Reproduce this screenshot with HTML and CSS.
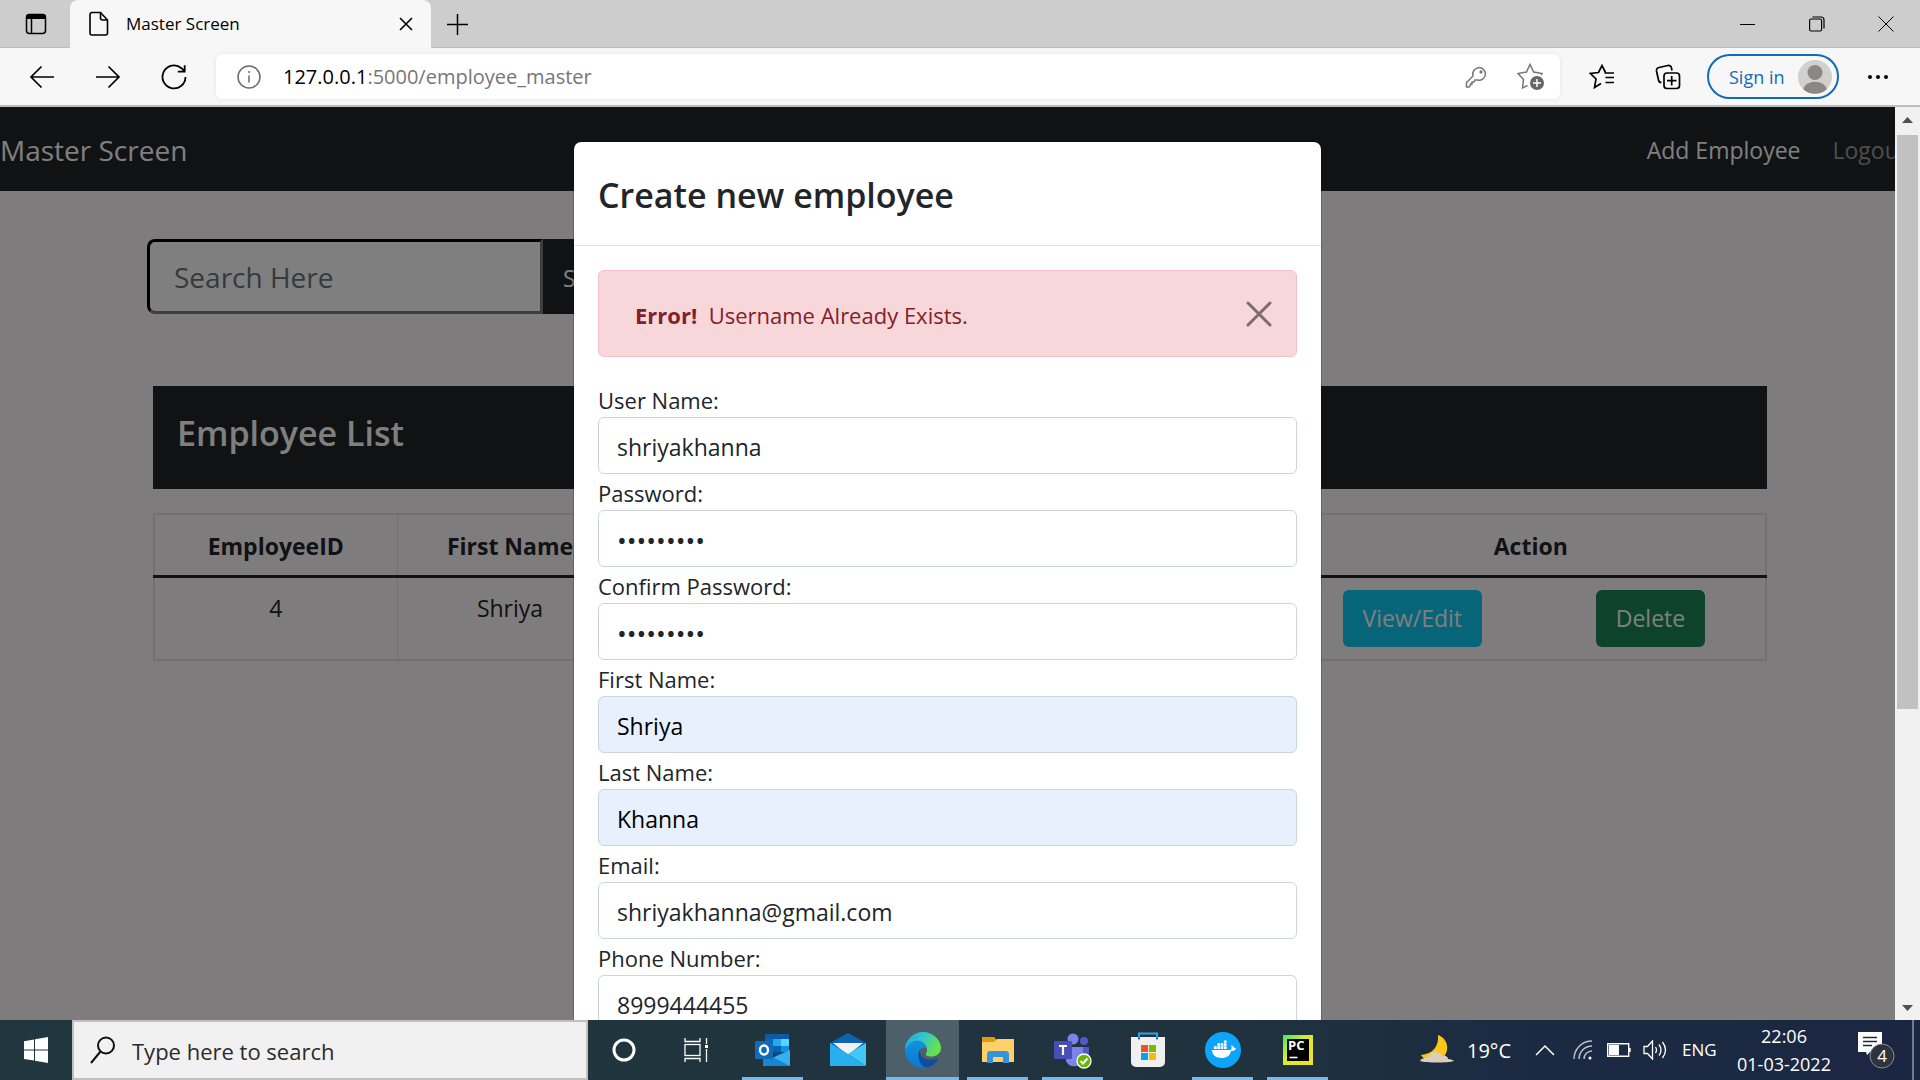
FILE: index.html
```html
<!DOCTYPE html>
<html lang="en">
<head>
<meta charset="utf-8">
<title>Master Screen</title>
<link rel="stylesheet" href="styles.css">
</head>
<body>
<header class="tabstrip">
  <button class="tab-actions" aria-label="Tab actions"><svg width="24" height="24" viewBox="0 0 24 24"><rect x="2.5" y="2.500" width="19" height="19" rx="3" fill="none" stroke="#000" stroke-width="1.500"/><path d="M2 7V4.500A3 3 0 0 1 5 2h14a3 3 0 0 1 3 2.500V7z"/><path d="M7.500 7v14" stroke="#000" stroke-width="1.500"/></svg></button>
  <div class="tab">
    <svg width="20" height="26" viewBox="0 0 20 26" fill="none" stroke="#000" stroke-width="1.600"><path d="M3 1.500h8.500L18.500 9v13a2 2 0 0 1-2 2H3a2 2 0 0 1-2-2V3.500a2 2 0 0 1 2-2z"/><path d="M11.500 1.500V7a2 2 0 0 0 2 2h5"/></svg>
    <span class="tab-title">Master Screen</span>
    <button class="tab-close" aria-label="Close tab"><svg width="14" height="14" viewBox="0 0 14 14" stroke="#000" stroke-width="1.600"><path d="M1 1l12 12M13 1L1 13"/></svg></button>
  </div>
  <button class="new-tab" aria-label="New tab"><svg width="21" height="21" viewBox="0 0 21 21" stroke="#000" stroke-width="1.500"><path d="M10.500 0v21M0 10.500h21"/></svg></button>
  <div class="window-buttons">
    <button aria-label="Minimize"><svg width="15" height="15" viewBox="0 0 15 15"><path d="M0 7.500h15" stroke="#000"/></svg></button>
    <button aria-label="Restore"><svg width="16" height="16" viewBox="0 0 16 16" fill="none" stroke="#000" stroke-width="1.200"><rect x=".6" y="3" width="12" height="12" rx="1.500"/><path d="M3.500 1h8.500a3 3 0 0 1 3 3v8.500"/></svg></button>
    <button aria-label="Close"><svg width="16" height="16" viewBox="0 0 16 16" stroke="#000"><path d="M.5.5l15 15M15.500.5l-15 15"/></svg></button>
  </div>
</header>
<nav class="toolbar" aria-label="Browser">
  <button class="tool" aria-label="Back"><svg width="26" height="24" viewBox="0 0 26 24" fill="none" stroke="#000" stroke-width="1.700"><path d="M25 12H2M12.500 1.500L2 12l10.500 10.500"/></svg></button>
  <button class="tool" aria-label="Forward"><svg width="26" height="24" viewBox="0 0 26 24" fill="none" stroke="#000" stroke-width="1.700"><path d="M1 12h23M13.500 1.500L24 12 13.500 22.500"/></svg></button>
  <button class="tool" aria-label="Refresh"><svg width="26" height="26" viewBox="0 0 26 26" fill="none" stroke="#000" stroke-width="1.800"><path d="M24.500 13A11.500 11.500 0 1 1 20.500 4.200l3 3M23.700 1.200v6.500h-6.900"/></svg></button>
  <div class="address">
    <svg width="24" height="24" viewBox="0 0 24 24" fill="none" stroke="#6b6b6b" stroke-width="1.500"><circle cx="12" cy="12" r="11"/><path d="M12 10.500v7M12 6v2"/></svg>
    <span class="url"><b>127.0.0.1</b>:5000/employee_master</span>
    <svg class="key" width="22" height="22" viewBox="0 0 22 22" fill="none" stroke="#767676" stroke-width="1.500"><path d="M8 9.500A6.300 6.300 0 1 1 12.500 14L10 14l-1 2H7v2H5.500V19.500L4 21H1.500V16.500L8 10z"/><circle cx="16" cy="6" r=".9"/></svg>
    <svg width="28" height="28" viewBox="0 0 28 28"><path d="M10.500 22.500l-5 2.500 1-8.500L1 10.500l8.500-1.500L13 1.500l3.700 7.500 8.300 1.500-1 1.500" fill="none" stroke="#767676" stroke-width="1.500"/><circle cx="20" cy="20" r="7" fill="#676767"/><path d="M20 16v8M16 20h8" stroke="#fff" stroke-width="1.500"/></svg>
  </div>
  <button class="tool" aria-label="Favorites"><svg width="26" height="26" viewBox="0 0 26 26" fill="none" stroke="#000" stroke-width="1.700"><path d="M12 19.500L5.500 23.500l1.500-8.500L1.500 9.500l8-1L13 1.500l3.500 7M16.500 13.500H25M16.500 18.500H25M15.500 9H25"/></svg></button>
  <button class="tool" aria-label="Collections"><svg width="26" height="26" viewBox="0 0 26 26" fill="none" stroke="#000" stroke-width="1.700"><path d="M6.500 18.500a3 3 0 0 1-3-2.500L1.500 7a3 3 0 0 1 2.500-3.500l9-2A3 3 0 0 1 16.500 4l.5 2.500"/><rect x="9" y="9" width="15.500" height="15.500" rx="3"/><path d="M16.700 12v9.500M12 16.700h9.500"/></svg></button>
  <button class="signin">Sign in<svg width="34" height="34" viewBox="0 0 34 34"><defs><clipPath id="av"><circle cx="17" cy="17" r="17"/></clipPath></defs><g clip-path="url(#av)"><path fill="#d2d0ce" d="M0 0h34v34H0z"/><circle cx="17" cy="12.500" r="7.500" fill="#8a8886"/><path d="M5 30c2-11 22-11 24 0-6 5-18 5-24 0z" fill="#8a8886"/></g></svg></button>
  <button class="tool" aria-label="Settings"><svg width="20" height="4" viewBox="0 0 20 4"><circle cx="2" cy="2" r="2"/><circle cx="10" cy="2" r="2"/><circle cx="18" cy="2" r="2"/></svg></button>
</nav>
<div class="browser-view">
  <main class="page">
    <nav class="navbar">
      <a class="brand" href="#">Master Screen</a>
      <a class="nav-link active" href="#">Add Employee</a>
      <a class="nav-link" href="#">Logout</a>
    </nav>
    <form class="search">
      <input class="search-input" type="text" placeholder="Search Here" aria-label="Search Here">
      <button class="search-button" type="button">Search</button>
    </form>
    <section class="employees">
      <h2 class="list-title">Employee List</h2>
      <table class="list">
        <colgroup><col class="c-id"><col class="c-name"><col><col class="c-edit"><col class="c-delete"></colgroup>
        <thead><tr><th>EmployeeID</th><th>First Name</th><th></th><th colspan="2">Action</th></tr></thead>
        <tbody><tr><td>4</td><td>Shriya</td><td></td><td class="act edit"><button class="btn info">View/Edit</button></td><td class="act last"><button class="btn success">Delete</button></td></tr></tbody>
      </table>
    </section>
    <div class="backdrop">
      <div class="modal" role="dialog" aria-labelledby="dialog-title">
        <div class="modal-header"><h4 id="dialog-title">Create new employee</h4></div>
        <form class="modal-body">
          <div class="alert" role="alert"><p><strong>Error!</strong>&nbsp; Username Already Exists.</p>
            <button class="alert-close" type="button" aria-label="Close"><svg width="26" height="26" viewBox="0 0 26 26" stroke="#7b6c6e" stroke-width="3" stroke-linecap="round"><path d="M2 2l22 22M24 2L2 24"/></svg></button></div>
          <label for="user">User Name:</label><input id="user" type="text" value="shriyakhanna">
          <label for="pw">Password:</label><input class="secret" id="pw" type="password" value="abcdefghi">
          <label for="pw2">Confirm Password:</label><input class="secret" id="pw2" type="password" value="abcdefghi">
          <label for="first">First Name:</label><input class="filled" id="first" type="text" value="Shriya">
          <label for="last">Last Name:</label><input class="filled" id="last" type="text" value="Khanna">
          <label for="email">Email:</label><input id="email" type="email" value="shriyakhanna@gmail.com">
          <label for="phone">Phone Number:</label><input id="phone" type="tel" value="8999444455">
        </form>
      </div>
    </div>
  </main>
  <div class="scrollbar" aria-hidden="true">
    <svg width="25" height="28" viewBox="0 0 25 28"><path d="M7 16l5.500-6 5.500 6z" fill="#505050"/></svg>
    <div class="track"><div class="thumb"></div></div>
    <svg width="25" height="28" viewBox="0 0 25 28"><path d="M7 13l5.500 6 5.500-6z" fill="#505050"/></svg>
  </div>
</div>
<footer class="taskbar">
  <button class="start" aria-label="Start"><svg width="24" height="26" viewBox="0 0 24 26" fill="#fff"><path d="M0 4.200l10-1.700v10H0zM11 2.300L24 0v12.500H11zM0 13.500h10v10L0 22zM11 13.500h13V26l-13-2.200z"/></svg></button>
  <label class="task-search"><svg width="26" height="28" viewBox="0 0 26 28" fill="none" stroke="#111" stroke-width="2"><circle cx="16" cy="9.500" r="8"/><path d="M10.500 15.500L1 27"/></svg><input type="text" placeholder="Type here to search" aria-label="Search"></label>
  <button class="task-tool" aria-label="Cortana"><svg width="24" height="24" viewBox="0 0 24 24"><circle cx="12" cy="12" r="10" fill="none" stroke="#fff" stroke-width="3"/></svg></button>
  <button class="task-tool" aria-label="Task View"><svg width="24" height="24" viewBox="0 0 24 24" fill="none" stroke="#fff" stroke-width="1.300"><path d="M1 0v3.500h15V0M1 24v-3.500h15V24M22.500 0v6M22.500 11v13"/><rect x="1" y="6.500" width="15" height="11"/><path d="M21 7h3v3h-3z" fill="#fff" stroke="none"/></svg></button>
  <div class="apps">
    <button class="app open" aria-label="Outlook"><svg width="36" height="36" viewBox="0 0 36 36"><path fill="#0a5cab" d="M10 2h24v18H10z"/><path fill="#1066b5" d="M10 7h8v13h-8z"/><path fill="#28a8ea" d="M18 7h8v7h-8z"/><path fill="#50d9ff" d="M26 7h8v7h-8z"/><path fill="#0364b8" d="M18 14h8v6h-8z"/><path fill="#1490df" d="M26 14h8v6h-8z"/><path fill="#0a4a8c" d="M18 20h17l-13 6z"/><path fill="#36b0ee" d="M35 18v16H8v-4z"/><path fill="#1585d8" d="M8 20l27 14H8z"/><rect y="9" width="18" height="18" rx="1" fill="#0f6cbd"/><ellipse cx="9" cy="18" rx="4" ry="4.500" fill="none" stroke="#fff" stroke-width="2.400"/></svg></button>
    <button class="app" aria-label="Mail"><svg width="36" height="36" viewBox="0 0 36 36"><path fill="#0f63b5" d="M0 11L18 1l18 10v10H0z"/><path fill="#f2f2f2" d="M3 11h30L18 23z"/><path fill="#29aef0" d="M0 11l18 11L36 34H0z"/><path fill="#42c8f5" d="M36 11v23L18 22z"/></svg></button>
    <button class="app current open" aria-label="Edge"><svg width="36" height="36" viewBox="0 0 36 36"><defs><linearGradient id="e1" x1="0" x2="1" y2=".4"><stop stop-color="#1fa2e0"/><stop offset=".5" stop-color="#2fc7cf"/><stop offset="1" stop-color="#68e24a"/></linearGradient><linearGradient id="e2" x2="0" y2="1"><stop stop-color="#1493dc"/><stop offset="1" stop-color="#0a78d4"/></linearGradient></defs><path fill="url(#e2)" d="M0 18C0 9 8 7 13 8c6 1 9 5 8 8-8-2-10 8-3 12 3 5 3 7 1 8C8 36 0 28 0 18z"/><path fill="#0d4f9e" d="M15 18c-4 6 0 17 7 17.500 5-1 10-5 11-9 0-1-1-.5-1.500-.3C23 30 14 26 15 18z"/><path fill="url(#e1)" d="M0 18C0 8 8 0 18 0s18 8 18 16c0 9-12 10-15 7-1-2 1.500-2 1-6C20 6 6 5 0 18z"/></svg></button>
    <button class="app open" aria-label="File Explorer"><svg width="34" height="36" viewBox="0 0 34 36"><path fill="#e09c0b" d="M1 5h12l2 2v5H1z"/><path fill="#fdd068" d="M1 10h12l3-3h17v23H1z"/><path fill="#3594dc" d="M8 19h18l2 2v10h-6v-6H12v6H6V21z"/></svg></button>
    <button class="app open" aria-label="Teams"><svg width="38" height="38" viewBox="0 0 38 38"><circle cx="19" cy="8" r="5.500" fill="#7b83eb"/><circle cx="30" cy="10" r="4" fill="#5059c9"/><path fill="#5059c9" d="M24 16h11v10a7 7 0 0 1-9 6z"/><path fill="#7b83eb" d="M12 16h17v12a9 9 0 0 1-17 2z"/><rect y="10" width="18" height="18" rx="1" fill="#464eb8"/><path d="M5 15h8M9 15v9" stroke="#fff" stroke-width="2.200"/><circle cx="30" cy="30" r="7" fill="#6bb700" stroke="#fff" stroke-width="1.300"/><path d="M26.500 30l2.500 2.500 4.500-5" fill="none" stroke="#fff" stroke-width="2"/></svg></button>
    <button class="app" aria-label="Microsoft Store"><svg width="36" height="36" viewBox="0 0 36 36"><path d="M9 7V1.500h18V7" fill="none" stroke="#28a8ea" stroke-width="2"/><path fill="#f0f0f0" d="M1 5h34v25a5 5 0 0 1-5 5H6a5 5 0 0 1-5-5z"/><path d="M9 5v2.500M27 5v2.500" stroke="#1a78c8" stroke-width="2"/><path fill="#f25022" d="M11 13h7v7h-7z"/><path fill="#7fba00" d="M19 13h7v7h-7z"/><path fill="#00a4ef" d="M11 21h7v7h-7z"/><path fill="#ffb900" d="M19 21h7v7h-7z"/></svg></button>
    <button class="app open" aria-label="Docker"><svg width="36" height="36" viewBox="0 0 36 36"><circle cx="18" cy="18" r="18" fill="#0da5fb"/><path fill="#fff" d="M7 18h18c2 0 2-3 1-5 3 1 2 3 5 3-1 3-3 3-5 3-1 5-5 7-9 7-6 0-10-3-10-8zM9 14.200h2.700v2.700H9zM12.300 14.200H15v2.700h-2.700zM15.600 14.200h2.700v2.700h-2.700zM18.900 14.200h2.700v2.700h-2.700zM12.300 11.200H15v2.500h-2.700zM15.600 11.200h2.700v2.500h-2.700zM18.900 11.200h2.700v2.500h-2.700zM18.900 8.500h2.700v2.200h-2.700z"/></svg></button>
    <button class="app open" aria-label="PyCharm"><svg width="30" height="30" viewBox="0 0 30 30"><defs><linearGradient id="pc" x2="1" y2="1"><stop stop-color="#3bea62"/><stop offset=".4" stop-color="#d9ea2c"/><stop offset="1" stop-color="#f0e030"/></linearGradient></defs><path fill="url(#pc)" d="M0 0h30v30H0z"/><path d="M4 4h22v22H4z"/><path d="M6.500 22.500h8" stroke="#fff" stroke-width="1.600"/><text class="pc" x="5" y="15">PC</text></svg></button>
  </div>
  <div class="tray">
    <svg class="moon" width="36" height="32" viewBox="0 0 36 32"><path d="M19 1c11 4 12 17 4 24-7 5-17 2-21-4 12-1 18-9 17-20z" fill="#fbc619"/><path d="M1 27c1-3 6-3 8-4 3-7 12-6 14-1 4-1 6 1 6 3 3 0 5 1 6 2-6 2-28 2-34 0z" fill="#dccdbd"/></svg>
    <span class="temp">19°C</span>
    <svg class="chev" width="20" height="12" viewBox="0 0 20 12" fill="none" stroke="#fff" stroke-width="1.500"><path d="M1 11l9-9 9 9"/></svg>
    <svg class="wifi" width="20" height="20" viewBox="0 0 20 20" fill="none" stroke="#b8c0c9" stroke-width="1.500"><path d="M1 19A18 18 0 0 1 19 1M6 19A13 13 0 0 1 19 6M11 19a8 8 0 0 1 8-8"/><circle cx="17" cy="18" r="1.500" fill="#fff" stroke="none"/></svg>
    <svg class="batt" width="24" height="14" viewBox="0 0 24 14"><path d="M.7.7h21v12.600H.7zM23 5v4" fill="none" stroke="#fff" stroke-width="1.400"/><path d="M2 2h10v10H2z" fill="#fff"/></svg>
    <svg class="vol" width="24" height="20" viewBox="0 0 24 20" fill="none" stroke="#fff" stroke-width="1.300"><path d="M1 6.500h3.500L9.500 1v18l-5-5.500H1z"/><path d="M12.500 7q2 3 0 6M16 4.500q4 5.500 0 11M19.500 2q6 8 0 16"/></svg>
    <span class="lang">ENG</span>
    <time class="clock"><span>22:06</span><span>01-03-2022</span></time>
    <button class="notes" aria-label="Notifications"><svg width="38" height="38" viewBox="0 0 38 38"><path fill="#fff" d="M0 1h24v20H12l-3 3-1-3H0z"/><path d="M5 6.500h14M5 10.500h14M5 14.500h9" stroke="#1b2a42" stroke-width="1.300"/><circle cx="24" cy="25" r="12" fill="#2f333b" stroke="#8b9098"/><text class="count" x="24" y="31">4</text></svg></button>
    <span class="desktop"></span>
  </div>
</footer>
</body>
</html>
```
FILE: styles.css
```css
*{box-sizing:border-box}
body{margin:0;height:100vh;display:flex;flex-direction:column;overflow:hidden;font-family:"Open Sans","Noto Sans",sans-serif;font-size:23px;line-height:36px;color:#212529}
button,input{font:inherit;color:inherit;margin:0}
button{border:0;padding:0;background:none}
svg{display:block;flex:none}
a{text-decoration:none;color:inherit}
h2,h4,p{margin:0;font-weight:400}

.tabstrip{height:48px;flex:none;display:flex;background:#cdcdcd;box-shadow:inset 0 -1px #bdbdbd}
.tab-actions{width:70px;padding-left:2px;display:grid;place-items:center}
.tab{width:361px;display:flex;align-items:center;padding:0 18px 0 19px;background:#f7f7f7;border-radius:8px 8px 0 0}
.tab-title{flex:1;padding-left:17px;font-size:17px;color:#000}
.new-tab{width:52px;display:grid;place-items:center}
.window-buttons{margin-left:auto;display:flex}
.window-buttons button{width:69px;display:grid;place-items:center}
.toolbar{height:59px;flex:none;display:flex;align-items:center;padding:0 9px;background:#f7f7f7;border-bottom:2px solid #bdbdbd}
.tool{width:66px;height:45px;display:grid;place-items:center;flex:none}
.address{flex:1;height:45px;margin:0 9px;padding:0 15px 0 21px;display:flex;align-items:center;background:#fff;border-radius:6px;box-shadow:0 0 4px #e4e4e4}
.url{flex:1;padding-left:22px;font-size:20px;color:#767676}
.url b{font-weight:400;color:#000}
.key{margin-right:30px}
.signin{width:132px;height:45px;margin:0 6px;padding:0 5px 0 20px;display:flex;align-items:center;justify-content:space-between;border:2px solid #0f6cbd;border-radius:23px;font-size:18px;color:#0f6cbd;flex:none}

.browser-view{flex:1;min-height:0;display:flex}
.page{flex:1;min-width:0;position:relative;overflow:hidden;background:#fff8fa}
.navbar{height:84px;padding-top:2px;display:flex;align-items:center;white-space:nowrap;background:#212529;color:#fff;margin-right:-12px}
.brand{flex:1;font-size:28px}
.nav-link{margin-left:32px;color:#9b9d9f}
.nav-link.active{color:#fff}
.search{display:flex;margin:48px 0 0 147px}
.search-input{width:396px;height:75px;padding:0 24px;border:3px inset #212529;border-color:#212529 #7c7c7c #7c7c7c #212529;border-radius:8px 0 0 8px;background:#fff;font-size:28px}
.search-input::placeholder{color:#6c757d;opacity:1}
.search-button{padding:2px 20px 0;background:#212529;color:#fff}
.employees{margin:72px 128px 0 153px}
.list-title{height:103px;padding:24px;background:#212529;color:#fff;font-size:34px;font-weight:600;line-height:46px}
.list{width:100%;margin-top:24px;border-collapse:collapse;table-layout:fixed;text-align:center;border:2px solid #dee2e6}
.c-id{width:243px}
.c-name{width:226px}
.c-edit{width:240px}
.c-delete{width:230px}
.list th{height:62px;padding:13px 12px 10px;border:1px solid #dee2e6;border-bottom:3px solid #212529;font-weight:700}
.list td{height:84px;padding:12px;border:1px solid #dee2e6;vertical-align:top}
.list .act{border-left:0;border-right:0}
.list .edit{padding-left:46px;text-align:left}
.list .last{border-right:1px solid #dee2e6}
.btn{height:57px;padding:0 20px;border-radius:6px;color:#fff}
.info{background:#0dcaf0}
.success{background:#198754}

.backdrop{position:absolute;inset:0;overflow:hidden;background:rgba(0,0,0,.5)}
.modal{width:749px;max-width:100%;margin:34px auto 0;border:1px solid rgba(0,0,0,.2);border-radius:8px;background:#fff;background-clip:padding-box}
.modal-header{padding:26px 24px 23px;border-bottom:1px solid #dee2e6}
.modal-header h4{font-size:34px;font-weight:600;line-height:54px}
.modal-body{padding:24px;display:flex;flex-direction:column}
.modal-body label{height:36px;font-size:22px;line-height:38px}
.alert{height:87px;margin-bottom:24px;padding:0 24px 0 36px;display:flex;align-items:center;justify-content:space-between;background:#f8d7da;border:1px solid #f5c2c7;border-radius:6px;color:#842029}
.alert p{padding-top:2px;font-size:22px}
.modal-body input{height:57px;padding:2px 18px 0;border:1px solid #ced4da;border-radius:6px;background:#fff;outline:0}
.modal-body .secret{font-size:26px}
.modal-body .filled{background:#e8f0fe;color:#000}

.scrollbar{width:25px;display:flex;flex-direction:column;background:#f1f1f1}
.track{flex:1;padding:0 2px}
.thumb{height:67%;background:#c1c1c1}

.taskbar{height:60px;flex:none;display:flex;background:linear-gradient(90deg,#20373f,#20323e 65%,#1b2a42 80%,#1b2742);color:#fff}
.start{width:72px;display:grid;place-items:center}
.task-search{width:516px;display:flex;align-items:center;padding-left:16px;background:#f1f1f1;border:2px solid #c0c0c0}
.task-search input{flex:1;min-width:0;padding:2px 0 0 16px;border:0;background:none;outline:0;font-size:22px}
.task-search input::placeholder{color:#2b2b2b;opacity:1}
.task-tool{width:72px;display:grid;place-items:center}
.apps{display:flex;gap:14px;padding-left:10px}
.app{width:61px;display:grid;place-items:center}
.open{box-shadow:inset 0 -3px #76b9ed}
.current{width:73px;margin:0 -6px;background:#4d5f68}
.pc{font-size:13px;font-weight:700;fill:#fff}
.tray{margin-left:auto;display:flex;align-items:center;flex:none;white-space:nowrap}
.temp{width:54px;margin-left:12px;padding-top:2px;font-size:20px}
.chev{margin-left:14px}
.wifi{margin-left:18px}
.batt{margin-left:14px}
.vol{margin-left:12px}
.lang{width:38px;margin-left:15px;font-size:17px}
.clock{width:100px;margin:0 24px 0 14px;display:flex;flex-direction:column;text-align:center;font-size:18px;line-height:28px}
.notes{width:38px}
.count{font-size:17px;fill:#fff;text-anchor:middle}
.desktop{width:8px;height:60px;margin-left:16px;border-left:2px solid #6f7b8a}
```
